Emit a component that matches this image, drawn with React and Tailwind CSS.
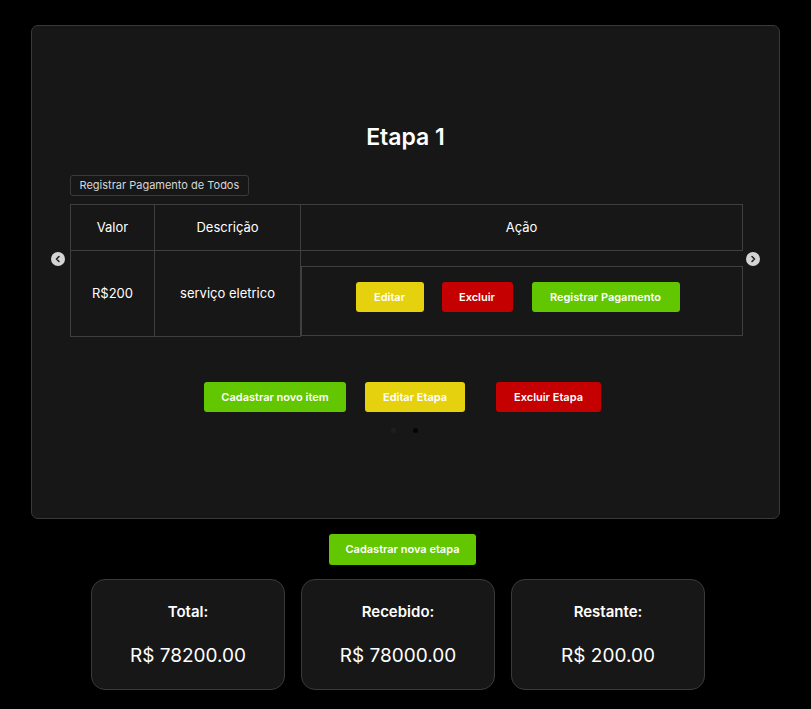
const font = { fontFamily: "Inter, 'Noto Sans', sans-serif" };

const Btn = ({ color, className = "", children }) => {
    const colors = {
        green: "bg-[#62c600]",
        yellow: "bg-[#e6d10f]",
        red: "bg-[#c40000]",
    };
    return (
        <button
            className={`${colors[color]} ${className} h-[30px] rounded-[3px] text-white text-[11px] font-semibold flex items-center justify-center`}
        >
            {children}
        </button>
    );
};

const Arrow = ({ dir }) => (
    <div className="w-[14px] h-[14px] rounded-full bg-[#d4d4d4] flex items-center justify-center">
        <svg width="8" height="8" viewBox="0 0 8 8">
            <path
                d={dir === "left" ? "M5 1.5 L2.5 4 L5 6.5" : "M3 1.5 L5.5 4 L3 6.5"}
                fill="none"
                stroke="#222"
                strokeWidth="1.6"
                strokeLinecap="round"
                strokeLinejoin="round"
            />
        </svg>
    </div>
);

const SummaryCard = ({ title, value }) => (
    <div className="w-[194px] h-[111px] bg-[#171717] border border-[#3a3a3a] rounded-[14px] flex flex-col items-center text-white">
        <p className="mt-[22px] text-[15px] font-semibold leading-5">{title}</p>
        <p className="mt-[22px] text-[19px] leading-6">{value}</p>
    </div>
);

export default function App() {
    return (
        <div className="min-h-[709px] bg-black pt-[25px]" style={font}>
            <div className="relative mx-[31px] h-[494px] bg-[#171717] border border-[#3a3a3a] rounded-[7px] pt-[95px] px-[38px]">
                <div className="absolute left-[19px] top-[226px]">
                    <Arrow dir="left" />
                </div>
                <div className="absolute right-[19px] top-[226px]">
                    <Arrow dir="right" />
                </div>

                <h2 className="text-white text-center text-[23px] font-semibold leading-8">
                    Etapa 1
                </h2>

                <button className="mt-[22px] h-[21px] px-[8.5px] border border-[#3a3a3a] rounded-[3px] text-[#d8d8d8] text-[11px] leading-none">
                    Registrar Pagamento de Todos
                </button>

                <div className="mt-[8px] w-[673px] border-l border-t border-[#3f3f3f] text-white text-[13px]">
                    <div className="flex h-[46px]">
                        <div className="w-[84px] border-r border-b border-[#3f3f3f] flex items-center justify-center">
                            Valor
                        </div>
                        <div className="w-[146px] border-r border-b border-[#3f3f3f] flex items-center justify-center">
                            Descrição
                        </div>
                        <div className="flex-1 border-r border-b border-[#3f3f3f] flex items-center justify-center">
                            Ação
                        </div>
                    </div>
                    <div className="flex h-[86px]">
                        <div className="w-[84px] border-r border-b border-[#3f3f3f] flex items-center justify-center">
                            R$200
                        </div>
                        <div className="w-[146px] border-r border-b border-[#3f3f3f] flex items-center justify-center">
                            serviço eletrico
                        </div>
                        <div className="flex-1 pt-[15px] -ml-px pl-[1px]">
                            <div className="h-[70px] border border-[#3f3f3f] flex items-start pt-[15px] justify-center gap-[18px] pr-[9px]">
                                <Btn color="yellow" className="w-[68px]">Editar</Btn>
                                <Btn color="red" className="w-[71px]">Excluir</Btn>
                                <Btn color="green" className="w-[148px] ml-px">Registrar Pagamento</Btn>
                            </div>
                        </div>
                    </div>
                </div>

                <div className="mt-[45px] flex justify-center pr-[6px]">
                    <Btn color="green" className="w-[142px]">Cadastrar novo item</Btn>
                    <Btn color="yellow" className="w-[100px] ml-[19px]">Editar Etapa</Btn>
                    <Btn color="red" className="w-[105px] ml-[31px]">Excluir Etapa</Btn>
                </div>

                <div className="mt-[16px] flex justify-center gap-[17px] pr-[2px]">
                    <span className="w-[5px] h-[5px] rounded-full bg-[#1f1f1f]" />
                    <span className="w-[5px] h-[5px] rounded-full bg-[#050505]" />
                </div>
            </div>

            <div className="mt-[15px] flex justify-center pr-[6px]">
                <Btn color="green" className="w-[147px] h-[31px]">Cadastrar nova etapa</Btn>
            </div>

            <div className="mt-[14px] flex justify-center gap-[16px] pr-[15px]">
                <SummaryCard title="Total:" value="R$ 78200.00" />
                <SummaryCard title="Recebido:" value="R$ 78000.00" />
                <SummaryCard title="Restante:" value="R$ 200.00" />
            </div>
        </div>
    );
}
